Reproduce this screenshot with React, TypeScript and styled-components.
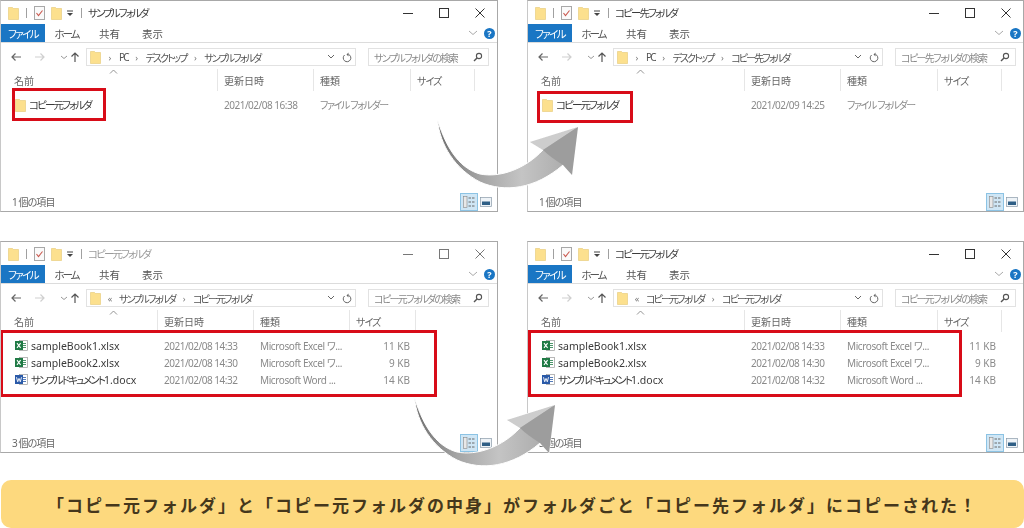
import { Fragment } from "react";
import styled, { createGlobalStyle } from "styled-components";

const GlobalStyle = createGlobalStyle`
  html, body {
    margin: 0;
    padding: 0;
    background: #fff;
  }
  #root {
    width: 1024px;
    height: 528px;
    overflow: hidden;
  }
`;

const Page = styled.div`
  position: relative;
  width: 1024px;
  height: 528px;
  display: flex;
  flex-direction: column;
  font-family: "Noto Sans", "Noto Sans CJK JP", sans-serif;
  font-feature-settings: "palt";
`;

const WindowGrid = styled.div`
  display: grid;
  grid-template-columns: 498px 497px;
  grid-template-rows: 212px 212px;
  column-gap: 29px;
  row-gap: 29px;
`;

const WindowFrame = styled.div`
  position: relative;
  box-sizing: border-box;
  height: 212px;
  display: flex;
  flex-direction: column;
  border: 1px solid #a8a8a8;
  border-left-color: #c8c8c8;
  background: #fff;
  overflow: hidden;
  filter: blur(0.3px);
`;

// kana in the reference is set much narrower than Noto Sans CJK
const Ja = styled.span`
  letter-spacing: -1.9px;
`;

const TitleBar = styled.div`
  height: 23px;
  display: flex;
  align-items: center;
  padding-left: 7px;
  flex: none;
`;

const TitleText = styled(Ja)<{ $inactive?: boolean }>`
  font-size: 10.5px;
  color: ${(p) => (p.$inactive ? "#9a9a9a" : "#3c3c3c")};
  margin-left: -1px;
  white-space: nowrap;
`;

const Pipe = styled.span`
  width: 1px;
  height: 10px;
  background: #a0a0a0;
  margin: 0 7px;
`;

const QuickGap = styled.span`
  width: 6px;
`;

const Controls = styled.div`
  margin-left: auto;
  margin-right: 12px;
  display: flex;
  align-items: center;
  gap: 26px;
`;

const TabRow = styled.div`
  height: 18px;
  display: flex;
  align-items: center;
  border-bottom: 1px solid #dcdcdc;
  flex: none;
`;

const FileTab = styled.div`
  width: 44px;
  height: 18px;
  background: #1a76c4;
  color: #fff;
  font-size: 10.5px;
  letter-spacing: -1.6px;
  display: flex;
  align-items: center;
  justify-content: center;
  white-space: nowrap;
`;

const Tab = styled.div<{ $tight?: boolean }>`
  font-size: 10.5px;
  color: #555;
  width: 43px;
  text-align: center;
  white-space: nowrap;
  letter-spacing: ${(p) => (p.$tight ? "-2px" : "0")};
`;

const TabEnd = styled.div`
  margin-left: auto;
  margin-right: 2px;
  display: flex;
  align-items: center;
  gap: 6px;
`;

const HelpBadge = styled.div`
  width: 11px;
  height: 11px;
  border-radius: 50%;
  background: #1a76c4;
  color: #fff;
  font-size: 9px;
  font-weight: 700;
  line-height: 11px;
  text-align: center;
`;

const NavRow = styled.div`
  height: 20px;
  margin-top: 4px;
  display: flex;
  align-items: center;
  padding-left: 9px;
  flex: none;
`;

const NavButtons = styled.div`
  width: 76px;
  display: flex;
  align-items: center;
`;

const NavSlot = styled.div`
  width: 24px;
  display: flex;
  justify-content: flex-start;
`;

const AddressBar = styled.div`
  box-sizing: border-box;
  width: 270px;
  height: 18px;
  border: 1px solid #e2e2e2;
  display: flex;
  align-items: center;
  padding: 0 3px;
  color: #555;
  font-size: 10px;
`;

const Crumb = styled(Ja)`
  white-space: nowrap;
`;

const CrumbSep = styled.span`
  width: 18px;
  text-align: center;
  color: #777;
  font-size: 9px;
`;

const AddressEnd = styled.div`
  margin-left: auto;
  display: flex;
  align-items: center;
  gap: 7px;
`;

const SearchBox = styled.div`
  box-sizing: border-box;
  width: 121px;
  height: 18px;
  margin-left: 12px;
  border: 1px solid #e2e2e2;
  display: flex;
  align-items: center;
  justify-content: space-between;
  padding: 0 5px;
  color: #8a8a8a;
  font-size: 10px;
  white-space: nowrap;
`;

const SearchLabel = styled.span`
  letter-spacing: -1.6px;
`;

const ListArea = styled.div`
  flex: 1;
  display: flex;
  flex-direction: column;
  min-height: 0;
`;

const HeaderRow = styled.div<{ $columns: string }>`
  position: relative;
  height: 22px;
  margin-top: 2px;
  display: grid;
  grid-template-columns: ${(p) => p.$columns};
  flex: none;
`;

const HeaderCell = styled.div<{ $first?: boolean }>`
  border-right: 1px solid #e6e6e6;
  padding-left: ${(p) => (p.$first ? 13 : 6)}px;
  padding-top: 4px;
  font-size: 10px;
  color: #666;
  white-space: nowrap;
`;

const SortCaret = styled.svg`
  position: absolute;
  left: 108px;
  top: 0;
`;

const Rows = styled.div`
  padding-top: 5px;
  display: flex;
  flex-direction: column;
`;

const Row = styled.div<{ $columns: string }>`
  height: 17px;
  display: grid;
  grid-template-columns: ${(p) => p.$columns};
  align-items: center;
  font-size: 10px;
  color: #8a8a8a;
  white-space: nowrap;
`;

const NameCell = styled.div`
  display: flex;
  align-items: center;
  gap: 3px;
  padding-left: 14px;
  color: #3a3a3a;
  font-size: 10.5px;
`;

const Cell = styled.div<{ $spacing: number }>`
  padding-left: 6px;
  overflow: hidden;
  letter-spacing: ${(p) => p.$spacing}px;
`;

const SizeCell = styled.div`
  text-align: right;
  padding-right: 6px;
`;

const StatusBar = styled.div`
  height: 17px;
  margin-bottom: 1px;
  display: flex;
  align-items: center;
  padding-left: 11px;
  font-size: 10px;
  color: #666;
  flex: none;
`;

const StatusText = styled.span`
  letter-spacing: -0.9px;
`;

const ViewButtons = styled.div`
  margin-left: auto;
  margin-right: 5px;
  display: flex;
  align-items: center;
  gap: 2px;
`;

const ViewActive = styled.div`
  box-sizing: border-box;
  width: 18px;
  height: 18px;
  background: #cfe6f5;
  border: 1px solid #8cc3e4;
  display: flex;
  align-items: center;
  justify-content: center;
`;

const Highlight = styled.div<{ $left: number; $top: number; $width: number; $height: number }>`
  position: absolute;
  box-sizing: border-box;
  left: ${(p) => p.$left}px;
  top: ${(p) => p.$top}px;
  width: ${(p) => p.$width}px;
  height: ${(p) => p.$height}px;
  border: 3px solid #d80c18;
  pointer-events: none;
`;

const Banner = styled.div`
  box-sizing: border-box;
  margin: 27px 0 0 1px;
  height: 48px;
  border-radius: 10px;
  background: #fdd97e;
  color: #45371c;
  font-family: "Noto Sans CJK JP", sans-serif;
  font-feature-settings: normal;
  font-size: 17px;
  font-weight: 700;
  letter-spacing: 2px;
  display: flex;
  align-items: center;
  justify-content: center;
`;

const ArrowSvg = styled.svg<{ $left: number; $top: number }>`
  position: absolute;
  left: ${(p) => p.$left}px;
  top: ${(p) => p.$top}px;
`;

function Folder() {
  return (
    <svg width="11" height="14" viewBox="0 0 11 14">
      <path d="M0.5 1.5h4l1 1h5v11h-10z" fill="#fce08e" stroke="#e6c873" strokeWidth="0.6" />
    </svg>
  );
}

function QuickAccess() {
  return (
    <>
      <Folder />
      <Pipe />
      <svg width="11" height="14" viewBox="0 0 11 14">
        <rect x="0.5" y="0.5" width="10" height="13" fill="#fafafa" stroke="#a8a8a8" />
        <path d="M2.5 7l2 2.5 4-5" fill="none" stroke="#c9574d" strokeWidth="1.1" />
      </svg>
      <QuickGap />
      <Folder />
      <svg width="12" height="10" viewBox="0 0 12 10">
        <path d="M5 3h6" stroke="#444" strokeWidth="1" />
        <path d="M5 5h6l-3 3z" fill="#444" />
      </svg>
      <Pipe />
    </>
  );
}

function WindowControls({ inactive }: { inactive?: boolean }) {
  const c = inactive ? "#777" : "#333";
  return (
    <Controls>
      <svg width="10" height="10" viewBox="0 0 10 10">
        <path d="M0 5.5h10" stroke={c} strokeWidth="1" />
      </svg>
      <svg width="10" height="10" viewBox="0 0 10 10">
        <rect x="0.5" y="0.5" width="9" height="9" fill="none" stroke={c} strokeWidth="1" />
      </svg>
      <svg width="10" height="10" viewBox="0 0 10 10">
        <path d="M0.5 0.5l9 9M9.5 0.5l-9 9" stroke={c} strokeWidth="1" />
      </svg>
    </Controls>
  );
}

function NavIcons() {
  return (
    <NavButtons>
      <NavSlot>
        <svg width="12" height="10" viewBox="0 0 12 10">
          <path d="M11 5H2M5.5 1.5L2 5l3.5 3.5" fill="none" stroke="#666" strokeWidth="1.2" />
        </svg>
      </NavSlot>
      <NavSlot>
        <svg width="12" height="10" viewBox="0 0 12 10">
          <path d="M1 5h9M6.5 1.5L10 5 6.5 8.5" fill="none" stroke="#cfcfcf" strokeWidth="1.2" />
        </svg>
      </NavSlot>
      <svg width="12" height="10" viewBox="0 0 12 10">
        <path d="M3 4l3 2.5L9 4" fill="none" stroke="#999" strokeWidth="1" />
      </svg>
      <svg width="10" height="12" viewBox="0 0 10 12">
        <path d="M5 11V2M1.5 5.5L5 2l3.5 3.5" fill="none" stroke="#555" strokeWidth="1.2" />
      </svg>
    </NavButtons>
  );
}

function FileIcon({ kind }: { kind: "excel" | "word" }) {
  const c = kind === "excel" ? "#1f7a45" : "#2a5aa8";
  return (
    <svg width="13" height="13" viewBox="0 0 13 13">
      <rect x="4.5" y="1.5" width="8" height="10" fill="#fff" stroke="#9a9a9a" strokeWidth="0.7" />
      <path d="M8 4.5h3M8 6.5h3M8 8.5h3" stroke={c} strokeWidth="0.8" />
      <rect x="0" y="2" width="8" height="9" fill={c} />
      {kind === "excel" ? (
        <path d="M2 4.2l3.6 4.6M5.6 4.2L2 8.8" stroke="#fff" strokeWidth="1.1" />
      ) : (
        <path d="M1.5 4.2l1.2 4.6 1.3-3.4 1.3 3.4 1.2-4.6" fill="none" stroke="#fff" strokeWidth="0.9" />
      )}
    </svg>
  );
}

function Arrow({ left, top }: { left: number; top: number }) {
  const id = `arrow-${left}`;
  return (
    <ArrowSvg $left={left} $top={top} width="155" height="80" viewBox="0 0 155 80">
      <defs>
        <linearGradient id={id} x1="0" y1="0" x2="1" y2="0">
          <stop offset="0" stopColor="#6f6f6f" />
          <stop offset="0.3" stopColor="#a4a4a4" />
          <stop offset="0.6" stopColor="#c4c4c4" />
          <stop offset="1" stopColor="#a6a6a6" />
        </linearGradient>
      </defs>
      <path
        d="M7.5 5C10 30 25 54 50 67C75 78 105 74 133 50L142 60L148 12L100 27L113 35C95 54 70 63 50 59C32 54 18 38 7.5 5Z"
        fill={`url(#${id})`}
        stroke="#fff"
        strokeWidth="1"
      />
      <path d="M100 27L148 12L113 35Z" fill="#cdcdcd" />
      <path d="M148 12L142 60L133 50C125 45 118 40 113 35Z" fill="#9d9d9d" />
    </ArrowSvg>
  );
}

interface FileRow {
  name: string;
  nameJa?: string;
  kind?: "excel" | "word";
  date: string;
  type: string;
  size?: string;
}

interface WindowProps {
  title: string;
  inactive?: boolean;
  crumbs: string[];
  overflowCrumbs?: boolean;
  search: string;
  columns: string;
  rows: FileRow[];
  status: string;
  highlight: { left: number; top: number; width: number; height: number };
}

const wide = "217px 96px 97px 64px";
const narrow = "157px 96px 96px 66px";

const excelType = "Microsoft Excel ワ...";
const wordType = "Microsoft Word ...";
const files: FileRow[] = [
  { name: "sampleBook1.xlsx", kind: "excel", date: "2021/02/08 14:33", type: excelType, size: "11 KB" },
  { name: "sampleBook2.xlsx", kind: "excel", date: "2021/02/08 14:30", type: excelType, size: "9 KB" },
  { nameJa: "サンプルドキュメント", name: "1.docx", kind: "word", date: "2021/02/08 14:32", type: wordType, size: "14 KB" },
];

const windows: WindowProps[] = [
  {
    title: "サンプルフォルダ",
    crumbs: ["PC", "デスクトップ", "サンプルフォルダ"],
    search: "サンプルフォルダの検索",
    columns: wide,
    rows: [{ nameJa: "コピー元フォルダ", name: "", date: "2021/02/08 16:38", type: "ファイル フォルダー" }],
    status: "1 個の項目",
    highlight: { left: 11, top: 87, width: 94, height: 33 },
  },
  {
    title: "コピー先フォルダ",
    crumbs: ["PC", "デスクトップ", "コピー先フォルダ"],
    search: "コピー先フォルダの検索",
    columns: wide,
    rows: [{ nameJa: "コピー元フォルダ", name: "", date: "2021/02/09 14:25", type: "ファイル フォルダー" }],
    status: "1 個の項目",
    highlight: { left: 9, top: 90, width: 96, height: 32 },
  },
  {
    title: "コピー元フォルダ",
    inactive: true,
    crumbs: ["サンプルフォルダ", "コピー元フォルダ"],
    overflowCrumbs: true,
    search: "コピー元フォルダの検索",
    columns: narrow,
    rows: files,
    status: "3 個の項目",
    highlight: { left: -1, top: 88, width: 437, height: 67 },
  },
  {
    title: "コピー元フォルダ",
    crumbs: ["コピー元フォルダ", "コピー元フォルダ"],
    overflowCrumbs: true,
    search: "コピー元フォルダの検索",
    columns: wide,
    rows: files,
    status: "3 個の項目",
    highlight: { left: 0, top: 88, width: 434, height: 67 },
  },
];

function ExplorerWindow(props: WindowProps) {
  const { title, inactive, crumbs, overflowCrumbs, search, columns, rows, status, highlight } = props;
  return (
    <WindowFrame>
      <TitleBar>
        <QuickAccess />
        <TitleText $inactive={inactive}>{title}</TitleText>
        <WindowControls inactive={inactive} />
      </TitleBar>
      <TabRow>
        <FileTab>ファイル</FileTab>
        <Tab $tight>ホーム</Tab>
        <Tab>共有</Tab>
        <Tab>表示</Tab>
        <TabEnd>
          <svg width="10" height="8" viewBox="0 0 10 8">
            <path d="M1 2l4 3.5L9 2" fill="none" stroke="#aaa" strokeWidth="1" />
          </svg>
          <HelpBadge>?</HelpBadge>
        </TabEnd>
      </TabRow>
      <NavRow>
        <NavIcons />
        <AddressBar>
          <Folder />
          {overflowCrumbs && <CrumbSep>«</CrumbSep>}
          {crumbs.map((c, i) => (
            <Fragment key={i}>
              {(i > 0 || !overflowCrumbs) && <CrumbSep>›</CrumbSep>}
              <Crumb>{c}</Crumb>
            </Fragment>
          ))}
          <AddressEnd>
            <svg width="8" height="6" viewBox="0 0 8 6">
              <path d="M1 1l3 3 3-3" fill="none" stroke="#666" strokeWidth="1" />
            </svg>
            <svg width="10" height="11" viewBox="0 0 10 11">
              <path d="M2.6 3A3.8 3.8 0 1 0 6.5 2.4" fill="none" stroke="#666" strokeWidth="1" />
              <path d="M6.5 0.4v4l-2-2z" fill="#666" />
            </svg>
          </AddressEnd>
        </AddressBar>
        <SearchBox>
          <SearchLabel>{search}</SearchLabel>
          <svg width="10" height="10" viewBox="0 0 10 10">
            <circle cx="6" cy="4" r="2.6" fill="none" stroke="#555" strokeWidth="1.1" />
            <path d="M4 6L1 9" stroke="#555" strokeWidth="1.4" />
          </svg>
        </SearchBox>
      </NavRow>
      <ListArea>
        <HeaderRow $columns={columns}>
          <SortCaret width="9" height="5" viewBox="0 0 9 5">
            <path d="M1 4.5L4.5 1 8 4.5" fill="none" stroke="#888" strokeWidth="0.9" />
          </SortCaret>
          <HeaderCell $first>名前</HeaderCell>
          <HeaderCell>更新日時</HeaderCell>
          <HeaderCell>種類</HeaderCell>
          <HeaderCell>
            <StatusText>サイズ</StatusText>
          </HeaderCell>
        </HeaderRow>
        <Rows>
          {rows.map((r) => (
            <Row key={r.date} $columns={columns}>
              <NameCell>
                {r.kind ? <FileIcon kind={r.kind} /> : <Folder />}
                <span>
                  {r.nameJa && <Ja>{r.nameJa}</Ja>}
                  {r.name}
                </span>
              </NameCell>
              <Cell $spacing={-0.5}>{r.date}</Cell>
              <Cell $spacing={r.kind ? -0.4 : -1.4}>{r.type}</Cell>
              {r.size && <SizeCell>{r.size}</SizeCell>}
            </Row>
          ))}
        </Rows>
      </ListArea>
      <StatusBar>
        <StatusText>{status}</StatusText>
        <ViewButtons>
          <ViewActive>
            <svg width="12" height="12" viewBox="0 0 12 12">
              <rect x="0.5" y="0.5" width="3.5" height="11" fill="#e8e8e8" stroke="#888" strokeWidth="0.6" />
              <path d="M5.5 2h6M5.5 6h6M5.5 10h6" stroke="#6a6a6a" strokeWidth="1" strokeDasharray="2.5 1" />
            </svg>
          </ViewActive>
          <svg width="12" height="10" viewBox="0 0 12 10">
            <rect x="0.5" y="0.5" width="11" height="9" fill="#eef3f7" stroke="#8a9aa8" strokeWidth="0.7" />
            <rect x="2" y="4.5" width="8" height="3.5" fill="#2f5f86" />
          </svg>
        </ViewButtons>
      </StatusBar>
      <Highlight $left={highlight.left} $top={highlight.top} $width={highlight.width} $height={highlight.height} />
    </WindowFrame>
  );
}

export default function App() {
  return (
    <>
      <GlobalStyle />
      <Page>
        <WindowGrid>
          {windows.map((w, i) => (
            <ExplorerWindow key={i} {...w} />
          ))}
        </WindowGrid>
        <Arrow left={430} top={115} />
        <Arrow left={407} top={393} />
        <Banner>「コピー元フォルダ」と「コピー元フォルダの中身」がフォルダごと「コピー先フォルダ」にコピーされた！</Banner>
      </Page>
    </>
  );
}
